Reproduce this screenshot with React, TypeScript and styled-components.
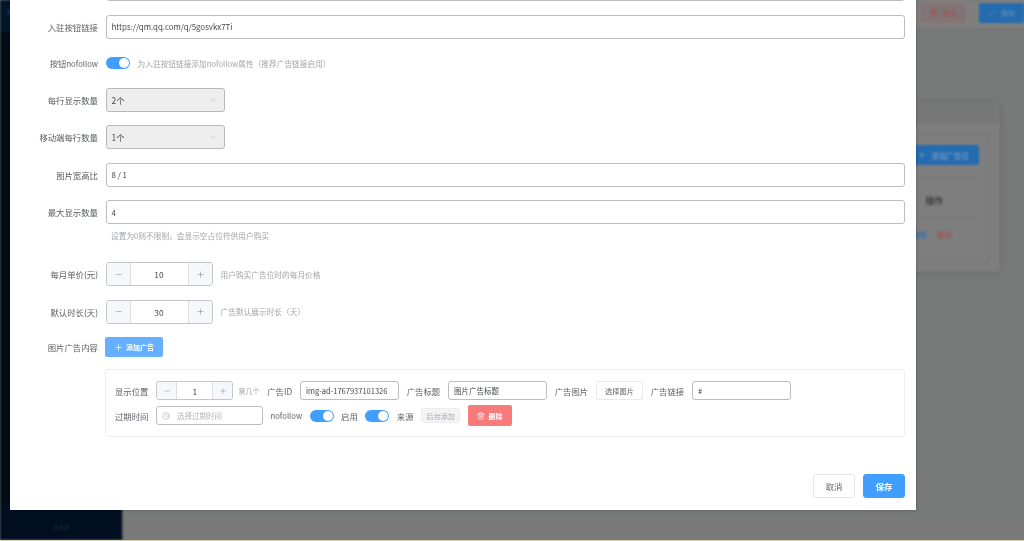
import React from "react";
import styled, { createGlobalStyle } from "styled-components";
import { Plus, Minus, Clock, Trash2, ChevronDown, Check } from "lucide-react";

const Global = createGlobalStyle`
  html, body { margin: 0; padding: 0; height: 541px; overflow: hidden; background: #d9cfa6; }
  #root { height: 540px; }
  * { box-sizing: border-box; }
  body { font-family: "Noto Sans CJK SC", "Liberation Sans", sans-serif; }
`;

const Page = styled.div`
  position: relative;
  width: 1024px;
  height: 540px;
  overflow: hidden;
  background: #787979;
`;

const Backdrop = styled.div`
  display: flex;
  height: 540px;
  filter: blur(0.8px);
`;

const Sidebar = styled.aside`
  width: 123px;
  flex: none;
  background: #000c18;
  display: flex;
  flex-direction: column;
  border-right: 1px solid #5c6166;
`;

const SidebarBrand = styled.div`
  height: 32px;
  background: #02172c;
  padding: 10px 0 0 8px;
`;

const BrandDot = styled.span`
  display: block;
  width: 3px;
  height: 5px;
  background: #0b3a6c;
`;

const SidebarVersion = styled.div`
  margin-top: auto;
  height: 36px;
  background: #000f20;
  display: flex;
  justify-content: center;
  align-items: center;
  padding-top: 10px;
  color: #2c3846;
  font-size: 7px;
`;

const Main = styled.main`
  flex: 1;
  display: flex;
  flex-direction: column;
`;

const TopBar = styled.header`
  height: 30px;
  background: #7f7f7f;
  display: flex;
  justify-content: flex-end;
  align-items: flex-start;
  gap: 13px;
  padding-top: 3px;
  border-bottom: 1px solid #737373;
`;

const TopButton = styled.div<{ $primary?: boolean }>`
  width: ${(p) => (p.$primary ? 45 : 46)}px;
  height: 20px;
  border-radius: 2px;
  display: flex;
  align-items: center;
  justify-content: center;
  gap: 5px;
  font-size: 7px;
  color: ${(p) => (p.$primary ? "#6f95bc" : "#a84a4a")};
  background: ${(p) => (p.$primary ? "#256bb0" : "#807575")};
  border: 1px solid ${(p) => (p.$primary ? "#256bb0" : "#9a6f6f")};
`;

const BgCard = styled.section`
  margin: 72px 24px 0 auto;
  width: 400px;
  height: 170px;
  background: #7e7e7e;
  box-shadow: 0 1px 6px rgba(0, 0, 0, 0.15);
  display: flex;
  flex-direction: column;
`;

const BgCardHead = styled.div`
  height: 22px;
  background: #787878;
`;

const BgInner = styled.div`
  margin: 10px 10px 10px 0;
  flex: 1;
  border: 1px solid #787878;
  display: flex;
  flex-direction: column;
  align-items: flex-end;
`;

const BgAddButton = styled.div`
  margin: 10px 10px 0 0;
  width: 80px;
  height: 20px;
  border-radius: 2px;
  background: #256bb0;
  color: #8aabcb;
  font-size: 7.5px;
  display: flex;
  align-items: center;
  justify-content: flex-end;
  padding-right: 10px;
  gap: 6px;
`;

const BgRow = styled.div<{ $height: number; $top?: number; $pad?: number }>`
  align-self: stretch;
  height: ${(p) => p.$height}px;
  margin: ${(p) => p.$top ?? 0}px 10px 0 0;
  padding-top: ${(p) => p.$pad ?? 0}px;
  border-top: 1px solid #767676;
  display: flex;
  align-items: center;
  justify-content: flex-end;
  gap: 10px;
`;

const BgHeadCell = styled.span`
  font-size: 8.8px;
  font-weight: 700;
  color: #3e3e3e;
  margin-right: 36px;
`;

const BgLink = styled.span<{ $danger?: boolean }>`
  font-size: 7.5px;
  color: ${(p) => (p.$danger ? "#a84a4a" : "#2a6cad")};
  margin-right: ${(p) => (p.$danger ? 27 : 0)}px;
`;

const Dialog = styled.div`
  position: absolute;
  left: 10px;
  top: -23px;
  width: 906px;
  height: 533px;
  background: #fff;
  box-shadow: 0 0 3px rgba(0, 0, 0, 0.3);
  padding-right: 11px;
  display: flex;
  flex-direction: column;
  font-size: 8.4px;
  color: #606266;
  filter: blur(0.3px);
`;

const Row = styled.div<{ $height?: number }>`
  display: flex;
  align-items: center;
  height: ${(p) => p.$height ?? 24}px;
  margin-bottom: 13.5px;
`;

const Label = styled.label`
  width: 88px;
  margin-right: 7.5px;
  flex: none;
  text-align: right;
  white-space: nowrap;
  color: #5a5c60;
`;

const LatinLabel = styled.span`
  font-size: 7.7px;
`;

const TextBox = styled.div<{ $width?: number; $small?: boolean; $muted?: boolean }>`
  ${(p) => (p.$width ? `width: ${p.$width}px; flex: none;` : "flex: 1;")}
  height: ${(p) => (p.$small ? 19 : 24)}px;
  border: 1px solid #bdbdbd;
  border-radius: 3px;
  background: #fff;
  display: flex;
  align-items: center;
  padding: 0 5px;
  gap: ${(p) => (p.$muted ? 7 : 4)}px;
  font-size: ${(p) => (p.$small ? 7.5 : 7.9)}px;
  color: ${(p) => (p.$muted ? "#b4b6ba" : "#45474b")};
  white-space: nowrap;
`;

const Select = styled.div`
  width: 119px;
  height: 24px;
  border: 1px solid #b8b8b8;
  border-radius: 3px;
  background: #eeeeee;
  display: flex;
  align-items: center;
  justify-content: space-between;
  padding: 0 6px 0 5px;
  color: #45474b;
`;

const Switch = styled.span`
  width: 24px;
  height: 12px;
  border-radius: 6px;
  background: #409eff;
  flex: none;
  display: flex;
  align-items: center;
  justify-content: flex-end;
  padding-right: 1px;
`;

const Knob = styled.span`
  width: 10px;
  height: 10px;
  border-radius: 50%;
  background: #fff;
`;

const Hint = styled.span<{ $left?: number; $size?: number }>`
  margin-left: ${(p) => p.$left ?? 8}px;
  font-size: ${(p) => p.$size ?? 7.7}px;
  color: #a3a5a9;
  white-space: nowrap;
`;

const Tip = styled.div`
  height: 24.5px;
  margin-bottom: 13.5px;
  margin-top: -13.5px;
  padding: 4px 0 0 101px;
  font-size: 7.7px;
  line-height: 16px;
  color: #a3a5a9;
`;

const Stepper = styled.div<{ $small?: boolean }>`
  width: ${(p) => (p.$small ? 77 : 107)}px;
  height: ${(p) => (p.$small ? 19 : 24)}px;
  flex: none;
  border: 1px solid #c4c6ca;
  border-radius: 3px;
  display: flex;
  align-items: center;
  overflow: hidden;
  color: #45474b;
`;

const StepButton = styled.span<{ $small?: boolean }>`
  width: ${(p) => (p.$small ? 19 : 23)}px;
  align-self: stretch;
  flex: none;
  background: #f5f7fa;
  color: #8a8c90;
  display: flex;
  align-items: center;
  justify-content: center;
`;

const StepValue = styled.span`
  flex: 1;
  align-self: stretch;
  display: flex;
  align-items: center;
  justify-content: center;
  border-left: 1px solid #dcdfe6;
  border-right: 1px solid #dcdfe6;
`;

const AddButton = styled.div`
  width: 58px;
  height: 20px;
  margin-left: -0.5px;
  border-radius: 2px;
  background: #66b1ff;
  color: #fff;
  font-size: 7px;
  font-weight: 700;
  display: flex;
  align-items: center;
  justify-content: center;
  gap: 3px;
`;

const AdPanel = styled.div`
  margin: -1.5px 0 0 95px;
  height: 68px;
  border: 1px solid #ebeef5;
  border-radius: 3px;
  padding: 11px 9px 0;
  display: flex;
  flex-direction: column;
  gap: 6px;
`;

const AdRow = styled.div<{ $gap: number }>`
  display: flex;
  align-items: center;
  height: 19px;
  gap: ${(p) => p.$gap}px;
  white-space: nowrap;
`;

const ChooseButton = styled.div`
  width: 47px;
  height: 19px;
  border: 1px solid #e8e9ec;
  border-radius: 2px;
  display: flex;
  align-items: center;
  justify-content: center;
  font-size: 7.2px;
  color: #606266;
`;

const SourceTag = styled.span`
  width: 39px;
  height: 15px;
  background: #f4f4f5;
  border: 1px solid #ececee;
  border-radius: 3px;
  color: #a8abb2;
  font-size: 7.2px;
  display: flex;
  align-items: center;
  justify-content: center;
`;

const DeleteButton = styled.div`
  width: 44px;
  height: 21px;
  border-radius: 2px;
  background: #f87b7b;
  color: #fff;
  font-size: 7px;
  font-weight: 700;
  display: flex;
  align-items: center;
  justify-content: center;
  gap: 4px;
`;

const Footer = styled.footer`
  margin-top: auto;
  display: flex;
  justify-content: flex-end;
  gap: 8px;
  padding-bottom: 12px;
`;

const FooterButton = styled.div<{ $primary?: boolean }>`
  width: 42px;
  height: 24px;
  border-radius: 3px;
  display: flex;
  align-items: center;
  justify-content: center;
  font-size: 8.4px;
  font-weight: ${(p) => (p.$primary ? 700 : 400)};
  color: ${(p) => (p.$primary ? "#fff" : "#606266")};
  background: ${(p) => (p.$primary ? "#409eff" : "#fff")};
  border: 1px solid ${(p) => (p.$primary ? "#409eff" : "#e4e6ea")};
`;

const NumberStepper = ({ value, small }: { value: string; small?: boolean }) => (
  <Stepper $small={small}>
    <StepButton $small={small}><Minus size={small ? 8 : 9} strokeWidth={1.5} /></StepButton>
    <StepValue>{value}</StepValue>
    <StepButton $small={small}><Plus size={small ? 8 : 9} strokeWidth={1.5} /></StepButton>
  </Stepper>
);

const Toggle = () => (
  <Switch><Knob /></Switch>
);

export default function App() {
  return (
    <Page>
      <Global />
      <Backdrop>
        <Sidebar>
          <SidebarBrand><BrandDot /></SidebarBrand>
          <SidebarVersion>1.4.0</SidebarVersion>
        </Sidebar>
        <Main>
          <TopBar>
            <TopButton><Trash2 size={8} />清空</TopButton>
            <TopButton $primary><Check size={8} />保存</TopButton>
          </TopBar>
          <BgCard>
            <BgCardHead />
            <BgInner>
              <BgAddButton><Plus size={8} />添加广告位</BgAddButton>
              <BgRow $height={40} $top={12} $pad={6}><BgHeadCell>操作</BgHeadCell></BgRow>
              <BgRow $height={33}><BgLink>编辑</BgLink><BgLink $danger>删除</BgLink></BgRow>
            </BgInner>
          </BgCard>
        </Main>
      </Backdrop>
      <Dialog>
        <Row><Label /><TextBox /></Row>
        <Row><Label>入驻按钮链接</Label><TextBox>https://qm.qq.com/q/5gosvkx7Ti</TextBox></Row>
        <Row $height={22}><Label>按钮<LatinLabel>nofollow</LatinLabel></Label><Toggle /><Hint>为入驻按钮链接添加nofollow属性（推荐广告链接启用）</Hint></Row>
        <Row><Label>每行显示数量</Label><Select>2个<ChevronDown size={10} strokeWidth={1.25} color="#b4b6ba" /></Select></Row>
        <Row><Label>移动端每行数量</Label><Select>1个<ChevronDown size={10} strokeWidth={1.25} color="#b4b6ba" /></Select></Row>
        <Row><Label>图片宽高比</Label><TextBox>8 / 1</TextBox></Row>
        <Row><Label>最大显示数量</Label><TextBox>4</TextBox></Row>
        <Tip>设置为0则不限制，会显示空占位符供用户购买</Tip>
        <Row><Label>每月单价(元)</Label><NumberStepper value="10" /><Hint>用户购买广告位时的每月价格</Hint></Row>
        <Row><Label>默认时长(天)</Label><NumberStepper value="30" /><Hint>广告默认展示时长（天）</Hint></Row>
        <Row $height={20}><Label>图片广告内容</Label><AddButton><Plus size={9} />添加广告</AddButton></Row>
        <AdPanel>
          <AdRow $gap={7.75}>
            <span>显示位置</span>
            <NumberStepper small value="1" />
            <Hint $left={-2.5} $size={7}>第几个</Hint>
            <span>广告ID</span>
            <TextBox $small $width={99}>img-ad-1767937101326</TextBox>
            <span>广告标题</span>
            <TextBox $small $width={99}>图片广告标题</TextBox>
            <span>广告图片</span>
            <ChooseButton>选择图片</ChooseButton>
            <span>广告链接</span>
            <TextBox $small $width={99}>#</TextBox>
          </AdRow>
          <AdRow $gap={7.5}>
            <span>过期时间</span>
            <TextBox $small $muted $width={107}><Clock size={8} />选择过期时间</TextBox>
            <LatinLabel>nofollow</LatinLabel>
            <Toggle />
            <span>启用</span>
            <Toggle />
            <span>来源</span>
            <SourceTag>后台添加</SourceTag>
            <DeleteButton><Trash2 size={8} />删除</DeleteButton>
          </AdRow>
        </AdPanel>
        <Footer>
          <FooterButton>取消</FooterButton>
          <FooterButton $primary>保存</FooterButton>
        </Footer>
      </Dialog>
    </Page>
  );
}
